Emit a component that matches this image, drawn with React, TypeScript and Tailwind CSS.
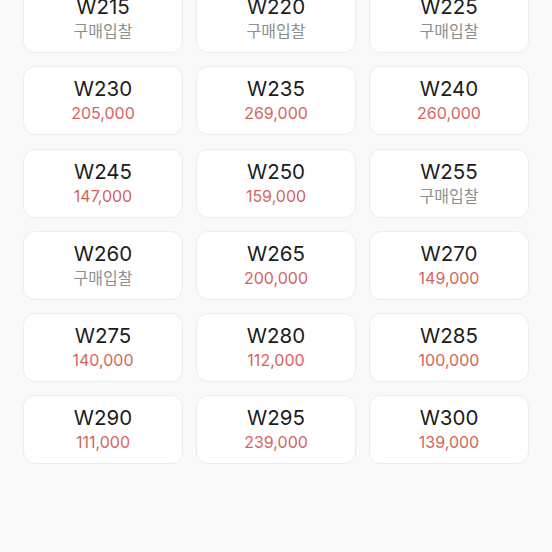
const sizes: { size: string; price?: string }[] = [
  { size: "W215" },
  { size: "W220" },
  { size: "W225" },
  { size: "W230", price: "205,000" },
  { size: "W235", price: "269,000" },
  { size: "W240", price: "260,000" },
  { size: "W245", price: "147,000" },
  { size: "W250", price: "159,000" },
  { size: "W255" },
  { size: "W260" },
  { size: "W265", price: "200,000" },
  { size: "W270", price: "149,000" },
  { size: "W275", price: "140,000" },
  { size: "W280", price: "112,000" },
  { size: "W285", price: "100,000" },
  { size: "W290", price: "111,000" },
  { size: "W295", price: "239,000" },
  { size: "W300", price: "139,000" },
];

export default function App() {
  return (
    <main
      className="h-[552px] w-[552px] overflow-hidden bg-[#f9f9f9]"
      style={{ fontFamily: 'Inter, "Noto Sans CJK KR", sans-serif' }}
    >
      <div className="-mt-[16px] grid grid-cols-3 gap-x-[13px] gap-y-[13.3px] px-[23px]">
        {sizes.map((s) => (
          <div
            key={s.size}
            className="flex h-[69px] flex-col items-center justify-center rounded-[12px] border border-[#ececec] bg-white"
          >
            <span className="text-[20.5px] leading-[25px] text-[#1c1c1c]">{s.size}</span>
            <span
              className={`text-[16px] leading-[24px] ${s.price ? "text-[#d6645c]" : "text-[#8e8e8e]"}`}
            >
              {s.price ?? "구매입찰"}
            </span>
          </div>
        ))}
      </div>
    </main>
  );
}
